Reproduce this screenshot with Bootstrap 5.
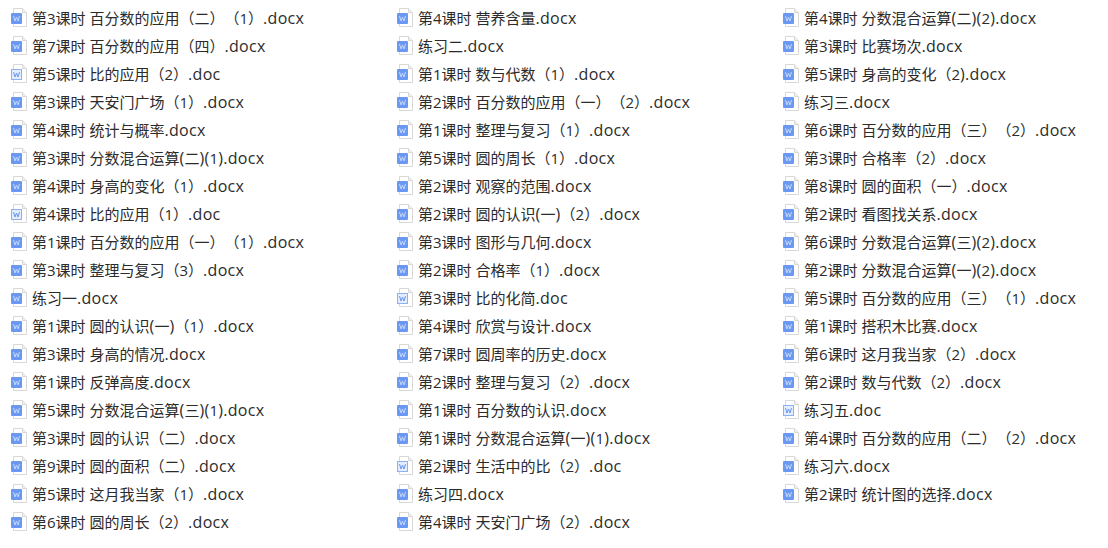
<!DOCTYPE html>
<html lang="zh-CN">
<head>
  <meta charset="UTF-8">
  <meta name="viewport" content="width=device-width, initial-scale=1.0">
  <title>文件列表</title>
  <link rel="stylesheet" href="https://cdn.jsdelivr.net/npm/bootstrap@5.3.3/dist/css/bootstrap.min.css">
  <style>
    body { background: #fff; overflow: hidden; }
    .file-cols { padding: 4px 0 0 10px; }
    .file-col { flex: 0 0 386px; }
    .file-col:last-child { flex: 1 1 0; min-width: 0; }
    .file-row { height: 28px; gap: 4px; font: 15px/28px "Open Sans", "Noto Sans CJK SC", sans-serif; font-feature-settings: "chws" 0; text-spacing-trim: space-all; color: #2b2b2b; white-space: nowrap; }
    .file-ico { width: 18px; height: 19px; flex: none; margin-top: -1px; }
    .file-lat { font-size: 16px; letter-spacing: .3px; }
  </style>
</head>
<body>
  <svg width="0" height="0" class="d-block">
    <symbol id="ico-docx" viewBox="0 0 18 19">
      <path d="M3.500 .5H12.500L16.500 4.500V18.500H3.500Z" fill="#fff" stroke="#d8d8d8"/>
      <path d="M12.500 .5V4.500H16.500" fill="#efefef" stroke="#d8d8d8"/>
      <rect x="1" y="5" width="11" height="11" rx="1" fill="#6a98f2"/>
      <path d="M3.500 8L5 13L6.500 9L8 13L9.500 8" fill="none" stroke="#c4d7fb"/>
    </symbol>
    <symbol id="ico-doc" viewBox="0 0 18 19">
      <path d="M3.500 .5H12.500L16.500 4.500V18.500H3.500Z" fill="#fff" stroke="#d8d8d8"/>
      <path d="M12.500 .5V4.500H16.500" fill="#efefef" stroke="#d8d8d8"/>
      <rect x="1.500" y="5.500" width="10" height="10" fill="#e3edfd" stroke="#8db0f3"/>
      <path d="M3.500 8L5 13L6.500 9L8 13L9.500 8" fill="none" stroke="#6a98f2"/>
    </symbol>
  </svg>
  <div class="file-cols d-flex" id="fileCols"></div>
  <script>
    const colunas = [
      ['第3课时 百分数的应用（二）（1）.docx','第7课时 百分数的应用（四）.docx','第5课时 比的应用（2）.doc','第3课时 天安门广场（1）.docx','第4课时 统计与概率.docx','第3课时 分数混合运算(二)(1).docx','第4课时 身高的变化（1）.docx','第4课时 比的应用（1）.doc','第1课时 百分数的应用（一）（1）.docx','第3课时 整理与复习（3）.docx','练习一.docx','第1课时 圆的认识(一)（1）.docx','第3课时 身高的情况.docx','第1课时 反弹高度.docx','第5课时 分数混合运算(三)(1).docx','第3课时 圆的认识（二）.docx','第9课时 圆的面积（二）.docx','第5课时 这月我当家（1）.docx','第6课时 圆的周长（2）.docx'],
      ['第4课时 营养含量.docx','练习二.docx','第1课时 数与代数（1）.docx','第2课时 百分数的应用（一）（2）.docx','第1课时 整理与复习（1）.docx','第5课时 圆的周长（1）.docx','第2课时 观察的范围.docx','第2课时 圆的认识(一)（2）.docx','第3课时 图形与几何.docx','第2课时 合格率（1）.docx','第3课时 比的化简.doc','第4课时 欣赏与设计.docx','第7课时 圆周率的历史.docx','第2课时 整理与复习（2）.docx','第1课时 百分数的认识.docx','第1课时 分数混合运算(一)(1).docx','第2课时 生活中的比（2）.doc','练习四.docx','第4课时 天安门广场（2）.docx'],
      ['第4课时 分数混合运算(二)(2).docx','第3课时 比赛场次.docx','第5课时 身高的变化（2).docx','练习三.docx','第6课时 百分数的应用（三）（2）.docx','第3课时 合格率（2）.docx','第8课时 圆的面积（一）.docx','第2课时 看图找关系.docx','第6课时 分数混合运算(三)(2).docx','第2课时 分数混合运算(一)(2).docx','第5课时 百分数的应用（三）（1）.docx','第1课时 搭积木比赛.docx','第6课时 这月我当家（2）.docx','第2课时 数与代数（2）.docx','练习五.doc','第4课时 百分数的应用（二）（2）.docx','练习六.docx','第2课时 统计图的选择.docx']
    ];

    // pontos, letras e parênteses ASCII saem mais largos na imagem
    const marcaLatino = nome => nome.replace(/[.a-z()]+/g, m => `<span class="file-lat">${m}</span>`);

    document.getElementById('fileCols').innerHTML = colunas.map(col => `
      <div class="file-col">
        ${col.map(nome => `
          <div class="file-row d-flex align-items-center">
            <svg class="file-ico"><use href="#ico-${nome.endsWith('.doc') ? 'doc' : 'docx'}"/></svg>
            <span>${marcaLatino(nome)}</span>
          </div>
        `).join('')}
      </div>
    `).join('');
  </script>
  <script src="https://cdn.jsdelivr.net/npm/bootstrap@5.3.3/dist/js/bootstrap.bundle.min.js"></script>
</body>
</html>
